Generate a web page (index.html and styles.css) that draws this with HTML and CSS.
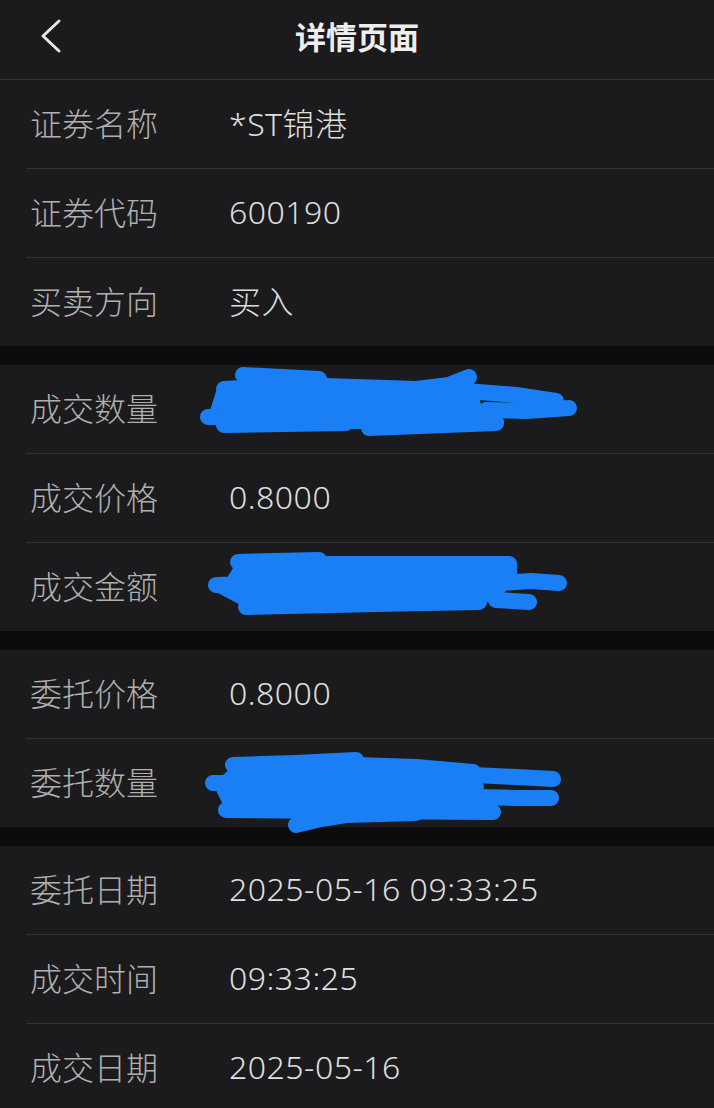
FILE: index.html
```html
<!DOCTYPE html>
<html lang="zh-CN">
<head>
  <meta charset="UTF-8" />
  <title>详情页面</title>
  <meta name="viewport" content="width=device-width, initial-scale=1.0"/>
  <link rel="stylesheet" href="styles.css">
</head>
<body>
<header class="topbar">
  <svg class="back" width="24" height="36" viewBox="0 0 24 36">
    <polyline points="19,3 3,18 19,33" fill="none" stroke="#e8e8e8" stroke-width="3" stroke-linecap="round" stroke-linejoin="round"/>
  </svg>
  <h1>详情页面</h1>
</header>

<main>
  <section class="group">
    <div class="row"><span class="label">证券名称</span><span class="value">*ST锦港</span></div>
    <div class="row"><span class="label">证券代码</span><span class="value">600190</span></div>
    <div class="row"><span class="label">买卖方向</span><span class="value">买入</span></div>
  </section>

  <section class="group">
    <div class="row">
      <span class="label">成交数量</span><span class="value"></span>
      <!-- redaction scribble -->
      <svg class="scribble" viewBox="0 0 714 88">
        <path d="M222 20 L330 17 L450 22 L482 28 L490 58 L380 64 L300 64 L228 60 L212 52 Z"/>
        <g>
          <polyline points="247,10 323,14"/>
          <polyline points="228,24 300,20 420,24 470,18"/>
          <polyline points="212,52 300,54 390,51 500,57"/>
          <polyline points="453,20 473,12"/>
          <polyline points="470,26 520,30 560,36"/>
          <polyline points="490,45 530,46 573,43"/>
          <polyline points="373,63 500,58"/>
          <polyline points="228,60 350,58"/>
        </g>
      </svg>
    </div>
    <div class="row"><span class="label">成交价格</span><span class="value">0.8000</span></div>
    <div class="row">
      <span class="label">成交金额</span><span class="value"></span>
      <svg class="scribble" viewBox="0 0 714 88">
        <path d="M240 20 L323 19 L513 21 L516 34 L505 58 L483 60 L250 65 L222 50 Z"/>
        <g>
          <polyline points="242,19 323,17"/>
          <polyline points="323,21 513,21"/>
          <polyline points="220,42 300,40 420,40 500,44"/>
          <polyline points="250,64 380,61 483,59"/>
          <polyline points="505,40 535,38 563,40"/>
          <polyline points="500,57 533,59"/>
          <polyline points="513,22 513,32"/>
        </g>
      </svg>
    </div>
  </section>

  <section class="group">
    <div class="row"><span class="label">委托价格</span><span class="value">0.8000</span></div>
    <div class="row">
      <span class="label">委托数量</span><span class="value"></span>
      <svg class="scribble" viewBox="0 0 714 88">
        <path d="M237 27 L360 22 L477 32 L490 60 L497 72 L230 72 L217 45 Z"/>
        <g>
          <polyline points="237,26 300,24 360,21"/>
          <polyline points="360,26 420,28 477,33"/>
          <polyline points="477,36 520,38 557,40"/>
          <polyline points="480,58 520,59 555,59"/>
          <polyline points="217,44 300,44 400,46 480,48"/>
          <polyline points="230,71 350,72 497,73"/>
          <polyline points="300,86 325,80 350,76 420,74"/>
        </g>
      </svg>
    </div>
  </section>

  <section class="group">
    <div class="row"><span class="label">委托日期</span><span class="value">2025-05-16 09:33:25</span></div>
    <div class="row"><span class="label">成交时间</span><span class="value">09:33:25</span></div>
    <div class="row"><span class="label">成交日期</span><span class="value">2025-05-16</span></div>
  </section>
</main>
</body>
</html>
```

FILE: styles.css
```css
body {
  margin: 0;
  background: #0c0c0c;
  font-family: "Noto Sans", "Noto Sans CJK SC", sans-serif;
  color: #e4e4e4;
}

.topbar {
  height: 71px;
  padding-bottom: 8px;
  border-bottom: 1px solid #333335;
  background: #1b1b1d;
  display: flex;
  align-items: center;
  justify-content: center;
  position: relative;
}

.topbar h1 {
  margin: 0;
  font-size: 31px;
  font-weight: 700;
  color: #eeeeee;
}

.back {
  position: absolute;
  left: 40px;
  top: 18px;
}

main {
  display: flex;
  flex-direction: column;
  gap: 19px;
}

.group {
  background: #1b1b1d;
  padding-left: 26px;
}

.row {
  height: 84px;
  padding-bottom: 4px;
  display: flex;
  align-items: center;
  padding-left: 4px;
  border-bottom: 1px solid #313133;
  position: relative;
  font-size: 32px;
  font-weight: 300;
}

.row:last-child {
  border-bottom: none;
}

.label {
  width: 199px;
  color: #b0b0b0;
  flex-shrink: 0;
}

.value {
  color: #dedede;
  letter-spacing: 0.5px;
}

.scribble {
  position: absolute;
  left: -30px;
  top: 0;
  width: 714px;
  height: 88px;
  overflow: visible;
  z-index: 1;
}

.scribble path {
  fill: #1a7ff5;
}

.scribble g {
  fill: none;
  stroke: #1a7ff5;
  stroke-width: 16;
  stroke-linecap: round;
  stroke-linejoin: round;
}
```
